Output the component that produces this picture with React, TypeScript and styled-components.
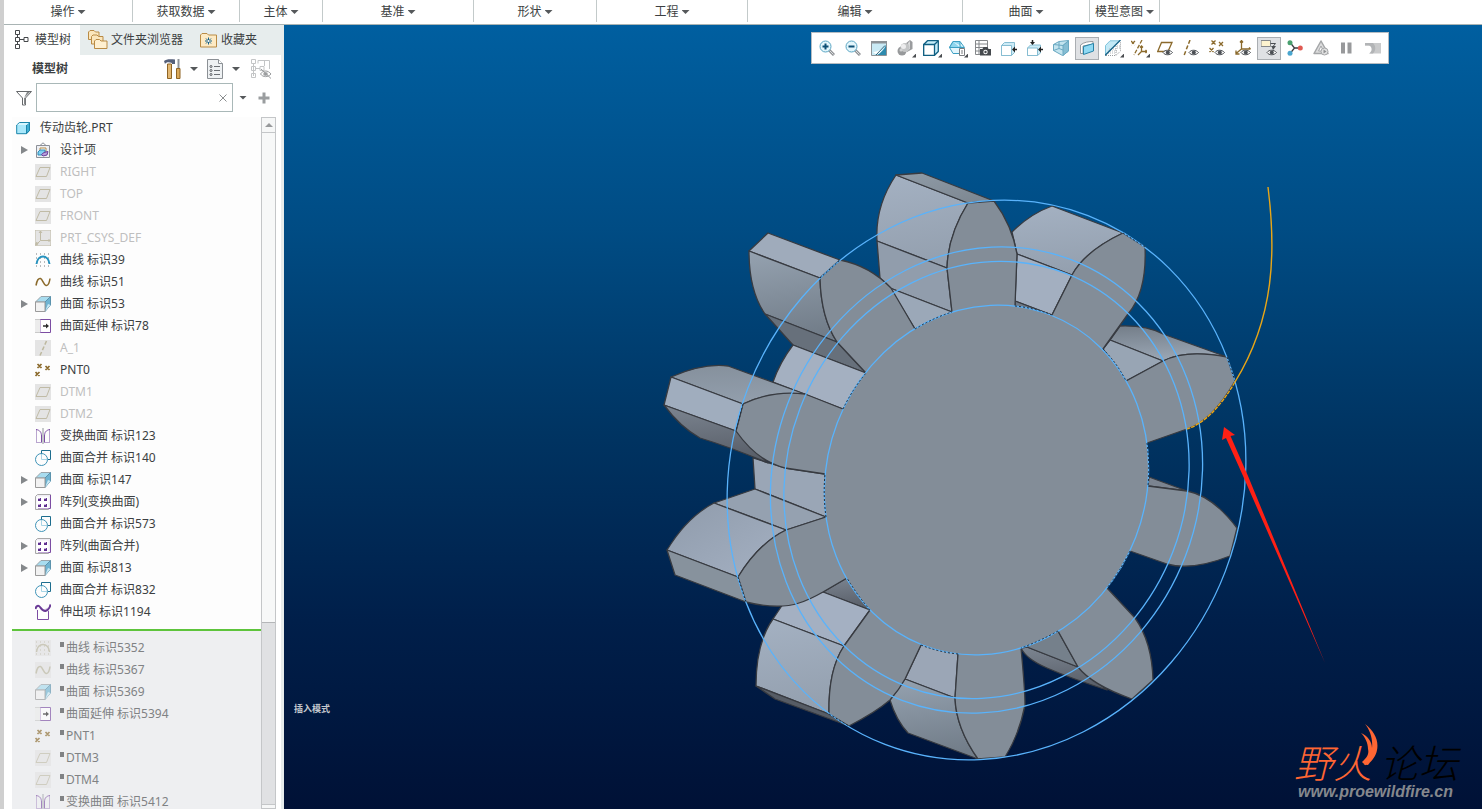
import React from 'react';
import styled, { createGlobalStyle, css } from 'styled-components';

const GlobalStyle = createGlobalStyle`
  * { box-sizing: border-box; }
  html, body, #root { height: 100%; }
  body {
    margin: 0;
    overflow: hidden;
    font: 12px/16px 'Noto Sans', 'Noto Sans CJK SC', sans-serif;
    color: #3c3f42;
  }
  button { border: 0; padding: 0; background: none; font: inherit; color: inherit; }
  svg { display: block; flex: none; }
`;

/* ---------- frame ---------- */

const Frame = styled.div`
  display: flex;
  flex-direction: column;
  height: 100vh;
  border-left: 4px solid #cfcfcf;
  background: #fff;
`;

const Ribbon = styled.nav`
  display: flex;
  flex: none;
  height: 25px;
  border-bottom: 1px solid #a9b4b4;
  background: #fff;
`;

const RibbonGroup = styled.button<{ $width: number }>`
  display: flex;
  align-items: center;
  justify-content: center;
  gap: 3px;
  flex: 0 0 ${(p) => p.$width}px;
  height: 22px;
  padding-top: 2px;
  border-right: 1px solid #c3caca;
  white-space: nowrap;
`;

const Workspace = styled.div`
  display: flex;
  flex: 1;
  min-height: 0;
`;

const Caret = styled.span`
  flex: none;
  width: 8px;
  height: 4px;
  background: #55585b;
  clip-path: polygon(0 0, 100% 0, 50% 100%);
`;

/* ---------- side panel ---------- */

const SidePanel = styled.aside`
  display: flex;
  flex-direction: column;
  flex: 0 0 280px;
  border-right: 3px solid #e6ecec;
  background: #fff;
`;

const TabBar = styled.div`
  display: flex;
  flex: none;
  height: 30px;
  background: #e7eded;
`;

const Tab = styled.button<{ $active?: boolean }>`
  display: flex;
  align-items: center;
  gap: ${(p) => (p.$active ? 6 : 3)}px;
  padding: 0 9px 0 ${(p) => (p.$active ? 11 : 8)}px;
  background: ${(p) => (p.$active ? '#fff' : 'transparent')};
`;

const TitleRow = styled.div`
  display: flex;
  align-items: center;
  flex: none;
  gap: 6px;
  height: 28px;
  padding: 0 6px 0 28px;
`;

const PanelTitle = styled.h2`
  flex: 1;
  margin: 0;
  font-size: 12px;
  font-weight: 700;
`;

const IconButton = styled.button<{ $width?: number }>`
  display: flex;
  align-items: center;
  justify-content: center;
  width: ${(p) => p.$width ?? 18}px;
  height: 20px;
`;

const FilterRow = styled.div`
  display: flex;
  align-items: center;
  flex: none;
  gap: 4px;
  height: 29px;
  padding: 0 6px 0 12px;
`;

const SearchBox = styled.label`
  display: flex;
  align-items: center;
  width: 197px;
  height: 29px;
  border: 1px solid #a9b8b8;
  background: #fff;
`;

const SearchInput = styled.input`
  flex: 1;
  min-width: 0;
  height: 26px;
  border: 0;
  outline: 0;
  padding: 0 4px;
  font: inherit;
`;

const TreeArea = styled.div`
  display: flex;
  flex: 1;
  min-height: 0;
  margin: 5px 5px 0 8px;
`;

const TreeColumn = styled.div`
  display: flex;
  flex-direction: column;
  flex: 1;
  min-width: 0;
  overflow: hidden;
  background: #fdfdfd;
`;

const Tree = styled.ul`
  flex: none;
  margin: 0;
  padding: 0;
  list-style: none;
`;

const ActiveTree = styled(Tree)`
  padding-bottom: 6px;
  border-bottom: 2px solid #5ec43c;
`;

const PendingTree = styled(Tree)`
  padding-top: 6px;
  background: #eeeff1;
`;

const TreeRow = styled.li<{ $tone: Tone; $root?: boolean }>`
  display: flex;
  align-items: center;
  gap: 9px;
  height: 22px;
  padding-left: ${(p) => (p.$root ? 4 : 8)}px;
  color: ${(p) => (p.$tone === 'normal' ? '#3c3f42' : p.$tone === 'hidden' ? '#bfbfbf' : '#808284')};
  white-space: nowrap;
`;

const IconCell = styled.span<{ $faded: boolean }>`
  display: flex;
  opacity: ${(p) => (p.$faded ? 0.65 : 1)};
`;

const IconLead = styled.span`
  display: flex;
  align-items: center;
`;

const Expander = styled.button<{ $shown: boolean }>`
  width: 15px;
  height: 16px;
  ${(p) =>
    p.$shown &&
    css`
      &::before {
        content: '';
        display: block;
        width: 7px;
        height: 8px;
        margin-left: 1px;
        background: #85888b;
        clip-path: polygon(0 0, 100% 50%, 0 100%);
      }
    `}
`;

const RowLabel = styled.span`
  display: flex;
  gap: 2px;
`;

const PendingMark = styled.span`
  width: 4px;
  height: 5px;
  margin-top: 2px;
  background: #808284;
`;

const ScrollBar = styled.div`
  display: flex;
  flex-direction: column;
  flex: 0 0 15px;
  border: solid #c4c6c8;
  border-width: 0 1px;
  background: #e0e1e3;
`;

const ScrollButton = styled.button<{ $height: number }>`
  display: flex;
  align-items: center;
  justify-content: center;
  flex: 0 0 ${(p) => p.$height}px;
  border: solid #c4c6c8;
  border-width: 1px 0;
  background: #f6f7f7;
`;

const UpCaret = styled(Caret)`
  background: #97999b;
  transform: rotate(180deg);
`;

const ScrollThumb = styled.div`
  flex: 0 0 490px;
  border-bottom: 1px solid #b4b6b8;
  background: #f7f8f8;
`;

const ScrollTrack = styled.div`
  flex: 1;
`;

/* ---------- graphics area ---------- */

const Canvas = styled.main`
  position: relative;
  display: flex;
  justify-content: flex-end;
  align-items: flex-start;
  flex: 1;
  min-width: 0;
  padding: 7px 93px 0 0;
  background: linear-gradient(#005fa0, #004c84 26%, #003462 52%, #001f4a 76%, #001136);
`;

const Scene = styled.svg`
  position: absolute;
  inset: 0;
  width: 100%;
  height: 100%;
`;

const ViewToolbar = styled.div`
  position: relative;
  display: flex;
  align-items: center;
  height: 32px;
  padding: 0 2px;
  border: 1px solid #b5bcc2;
  background: #fff;
`;

const ToolButton = styled.button<{ $pressed?: boolean }>`
  position: relative;
  display: flex;
  align-items: center;
  justify-content: center;
  width: 24px;
  height: 23px;
  margin: 0 1px;
  border: 1px solid ${(p) => (p.$pressed ? '#aaaeb2' : 'transparent')};
  background: ${(p) => (p.$pressed ? '#dfe1e4' : 'transparent')};
`;

const MenuCorner = styled.span`
  position: absolute;
  right: 0;
  bottom: 1px;
  width: 4px;
  height: 4px;
  background: #4a4d50;
  clip-path: polygon(100% 0, 100% 100%, 0 100%);
`;

const ModeNote = styled.span`
  position: absolute;
  left: 10px;
  bottom: 92px;
  color: #c4c8ce;
  font-size: 9px;
  font-weight: 700;
`;

const Brand = styled.div`
  position: absolute;
  right: 18px;
  bottom: 8px;
  width: 170px;
  font-style: italic;
`;

const BrandName = styled.div`
  display: flex;
  color: #000;
  font-size: 39px;
  font-weight: 300;
  line-height: 40px;
`;

const BrandAccent = styled.span`
  margin-right: 8px;
  color: #ff6633;
`;

const BrandFlame = styled.svg`
  position: absolute;
  left: 66px;
  top: -20px;
`;

const BrandUrl = styled.a`
  display: block;
  padding-left: 4px;
  color: #85888d;
  font-family: 'Liberation Sans', sans-serif;
  font-size: 16px;
  font-weight: 700;
  line-height: 18px;
  text-decoration: none;
`;

/* ---------- tree icons ---------- */

type Tone = 'normal' | 'hidden' | 'pending';

type TreeIconName =
  | 'part' | 'design' | 'plane' | 'csys' | 'sketch' | 'curve' | 'surface' | 'extend'
  | 'axis' | 'points' | 'mirror' | 'merge' | 'pattern' | 'protrusion';

const Plate = () => <rect width="16" height="16" fill="#e4e4e4" />;

const treeArt: Record<TreeIconName, React.ReactNode> = {
  part: (
    <g stroke="#1c86ab" strokeLinejoin="round">
      <path d="M.7 5 3.500 2.500H13.500V10.500L10.500 13.700H.7Z" fill="#a9e8fb" />
      <path d="M10.500 5 13.500 2.500V10.500L10.500 13.700Z" fill="#3faed3" />
      <path d="M1.200 5 3.800 3H13L10.500 5Z" fill="#d6f6ff" stroke="none" />
    </g>
  ),
  design: (
    <g>
      <path d="M1.500 3.500h13v12h-13z" fill="#eef0f4" stroke="#8c9098" />
      <path d="M5 3.500 8 .8 11 3.500z" fill="#fff" stroke="#8c9098" />
      <path d="M5 6h6v4H5z" fill="#fff" stroke="#b48b4a" />
      <path d="M3 10 5 8h5v3l-2 2H3z" fill="#7fd0f2" stroke="#2f8db8" />
      <path d="M6.500 12.500 9 10.500l4-1-1 3.500-4 1z" fill="#b9a0dc" stroke="#6a3f9c" />
    </g>
  ),
  plane: (
    <g>
      <Plate />
      <path d="M5 3.500h10L11.500 12.500H1z" fill="none" stroke="#c0bba6" />
    </g>
  ),
  csys: (
    <g stroke="#c0bba6" fill="none">
      <Plate />
      <path d="M5.500 1v9.500H15M5.500 10.500 1 15M4 3l1.500-2L7 3M13.500 9l1.500 1.500-1.500 1.500" />
      <path d="M2.500 12.500 1 15" strokeWidth="2.500" />
    </g>
  ),
  sketch: (
    <g>
      <path d="M1 2h14M1 6h14M1 10h14M1 14h14" stroke="#75787c" strokeDasharray="1 3" />
      <path d="M1.500 12C2 7 5 4.500 8 4.500S14 7 14.500 12" fill="none" stroke="#2793bf" strokeWidth="2" />
    </g>
  ),
  curve: <path d="M1 11.500C2 6 3.500 4 5.500 4.500S8.500 11 11 11.500 14.500 8 15 4.500" fill="none" stroke="#8b6a2c" strokeWidth="1.500" />,
  surface: (
    <g>
      <path d="M.5 6 6 .5H15.500L10 6z" fill="#a8dcef" stroke="#9aa4aa" />
      <path d="M10 6 15.500.5V9L10 15.500z" fill="#6fb4d2" stroke="#5b93ad" />
      <path d="M10 15.500 15.500 9 13 8z" fill="#c8e8f4" />
      <path d="M.5 6H10v9.500H.5z" fill="#f2f2f2" stroke="#9a9a9a" />
    </g>
  ),
  extend: (
    <g fill="none">
      <path d="M0 1.500h5.500v13H0" fill="#ececec" stroke="#c9c9c9" />
      <path d="M5.500 1.500h10v13h-10z" fill="#fff" stroke="#7c4da3" />
      <path d="M5.500 2v12" stroke="#c9b5da" />
      <path d="M8 8h5" stroke="#2c2c2c" strokeWidth="1.500" />
      <path d="M11 5.500 14 8l-3 2.500z" fill="#2c2c2c" />
    </g>
  ),
  axis: (
    <g>
      <Plate />
      <path d="M11.500 1 5 15.500" stroke="#bdb89f" strokeDasharray="4 2" strokeWidth="1.500" />
    </g>
  ),
  points: (
    <path d="M2.500 2l4 4m0-4-4 4M10.500 4l4 4m0-4-4 4M.5 10l4 4m0-4-4 4" stroke="#8b6a2c" strokeWidth="1.700" fill="none" />
  ),
  mirror: (
    <g fill="none">
      <path d="M1.500 1v14M1 14.500h5.500M14.500 1v14M15 14.500H9.500" stroke="#b9a5cf" />
      <path d="M1 1.500C5 2 6.500 4.500 6.500 8v6.500M15 1.500c-4 .5-5.500 3-5.500 6.500v6.500" stroke="#7c4da3" />
      <path d="M8 0v16" stroke="#8f9499" />
    </g>
  ),
  merge: (
    <g fill="none" stroke="#1d6d8e">
      <path d="M6.500 5V.5H15.500V9.500H12" />
      <circle cx="6.500" cy="9.500" r="6" stroke="#3f93b7" />
      <path d="M6.500 4v5.500h6" stroke="#a7d4e6" />
    </g>
  ),
  pattern: (
    <g>
      <path d="M2.500.5h13v13l-2 2H.5V2.500z" fill="#f0edf5" stroke="#a8a8a8" />
      <path d="M15.500 1v13.500H3" fill="none" stroke="#7c4da3" />
      <path d="M1.500 2.500h12v12h-12z" fill="#fff" />
      <path d="M3 4h3v3H3zM9 4h3v3H9zM3 10h3v3H3zM9 10h3v3H9z" fill="#5f2f90" />
      <path d="M3 4.500h2M9 4.500h2M3 10.500h2M9 10.500h2" stroke="#c6b4da" />
    </g>
  ),
  protrusion: (
    <g>
      <path d="M2.500 6V15.500H13.500V6" fill="#fff" stroke="#7c4da3" />
      <path d="M9 5.500 14 3v4l-4 .5z" fill="#d3c4e2" />
      <path d="M.5 5C1 1.500 3.500 1 5 3s3 4.500 5.500 4S15 3 15.500.5" fill="none" stroke="#6a3a96" strokeWidth="2" />
    </g>
  ),
};

const TreeIcon = ({ name }: { name: TreeIconName }) => (
  <svg width={name === 'part' ? 15 : 16} height="16" viewBox={name === 'part' ? '0 0 15 16' : '0 0 16 16'}>
    {treeArt[name]}
  </svg>
);

interface FeatureItem {
  label: string;
  icon: TreeIconName;
  tone?: Tone;
  expandable?: boolean;
}

const features: FeatureItem[] = [
  { label: '设计项', icon: 'design', expandable: true },
  { label: 'RIGHT', icon: 'plane', tone: 'hidden' },
  { label: 'TOP', icon: 'plane', tone: 'hidden' },
  { label: 'FRONT', icon: 'plane', tone: 'hidden' },
  { label: 'PRT_CSYS_DEF', icon: 'csys', tone: 'hidden' },
  { label: '曲线 标识39', icon: 'sketch' },
  { label: '曲线 标识51', icon: 'curve' },
  { label: '曲面 标识53', icon: 'surface', expandable: true },
  { label: '曲面延伸 标识78', icon: 'extend' },
  { label: 'A_1', icon: 'axis', tone: 'hidden' },
  { label: 'PNT0', icon: 'points' },
  { label: 'DTM1', icon: 'plane', tone: 'hidden' },
  { label: 'DTM2', icon: 'plane', tone: 'hidden' },
  { label: '变换曲面 标识123', icon: 'mirror' },
  { label: '曲面合并 标识140', icon: 'merge' },
  { label: '曲面 标识147', icon: 'surface', expandable: true },
  { label: '阵列(变换曲面)', icon: 'pattern', expandable: true },
  { label: '曲面合并 标识573', icon: 'merge' },
  { label: '阵列(曲面合并)', icon: 'pattern', expandable: true },
  { label: '曲面 标识813', icon: 'surface', expandable: true },
  { label: '曲面合并 标识832', icon: 'merge' },
  { label: '伸出项 标识1194', icon: 'protrusion' },
];

const pendingArt: Partial<Record<TreeIconName, React.ReactNode>> = {
  sketch: (
    <g>
      <Plate />
      <path d="M1 2h14M1 6h14M1 10h14M1 14h14" stroke="#b5b09a" strokeDasharray="1 3" />
      <path d="M1.500 12C2 7 5 4.500 8 4.500S14 7 14.500 12" fill="none" stroke="#b8b49c" strokeWidth="1.500" />
    </g>
  ),
  curve: (
    <g>
      <Plate />
      <path d="M1 11.500C2 6 3.500 4 5.500 4.500S8.500 11 11 11.500 14.500 8 15 4.500" fill="none" stroke="#b8b49c" strokeWidth="1.500" />
    </g>
  ),
};

const pendingFeatures: FeatureItem[] = [
  { label: '曲线 标识5352', icon: 'sketch' },
  { label: '曲线 标识5367', icon: 'curve' },
  { label: '曲面 标识5369', icon: 'surface' },
  { label: '曲面延伸 标识5394', icon: 'extend' },
  { label: 'PNT1', icon: 'points' },
  { label: 'DTM3', icon: 'plane' },
  { label: 'DTM4', icon: 'plane' },
  { label: '变换曲面 标识5412', icon: 'mirror' },
];

/* ---------- toolbar icons ---------- */

const Eye = () => (
  <g>
    <path d="M6 12.500C8 9.500 13 9.500 15.500 12.500 13 15.500 8 15.500 6 12.500z" fill="#fff" stroke="#4b4f54" />
    <circle cx="10.800" cy="12.500" r="2" fill="#4b4f54" />
  </g>
);

const Lens = ({ plus }: { plus?: boolean }) => (
  <g fill="none">
    <path d="M10 10l5 5" stroke="#8f9296" strokeWidth="3" />
    <path d="M10.500 10.500l4 4" stroke="#dcdedf" />
    <circle cx="6.500" cy="6.500" r="5.500" fill="#e3f6fc" stroke="#5ba6c4" />
    <path d={plus ? 'M3.500 6.500h6M6.500 3.500v6' : 'M3.500 6.500h6'} stroke="#0d4f75" strokeWidth="2" />
  </g>
);

interface Tool {
  label: string;
  art: React.ReactNode;
  pressed?: boolean;
  menu?: boolean;
}

const tools: Tool[] = [
  { label: '放大', art: <Lens plus /> },
  { label: '缩小', art: <Lens /> },
  {
    label: '重画',
    art: (
      <g>
        <path d="M.5 1.500h15v14H.5z" fill="#c9eaf5" stroke="#8c9296" />
        <path d="M0 1h16v2.500H0z" fill="#8c9296" />
        <path d="M15 5v10H4C10 13 13 10 15 5z" fill="#2d8aae" />
        <path d="M2 12C7 12 11 9 14 5L9 13 6 15z" fill="#fff" />
        <path d="M5 15 14 5.500" stroke="#22617c" />
      </g>
    ),
  },
  {
    label: '渲染选项', menu: true,
    art: (
      <g>
        <path d="M8 4 13 0 15.500 2v7L10 12z" fill="#9a9c9e" />
        <path d="M11 3 13 1v8l-2 1z" fill="#d9dadb" />
        <circle cx="5" cy="11" r="4.500" fill="#97999b" />
        <circle cx="8" cy="7.500" r="4.500" fill="#c3c5c6" />
        <circle cx="6.500" cy="6.500" r="2.500" fill="#ededee" />
        <circle cx="4" cy="10" r="1.500" fill="#d2d3d4" />
      </g>
    ),
  },
  {
    label: '显示样式', menu: true,
    art: (
      <g stroke="#0f5f82" strokeLinejoin="round" strokeWidth="1.300">
        <path d="M.7 4.500 4.500.7H15.300V11.500L11.500 15.300H.7z" fill="#c4ecf9" />
        <path d="M.7 4.500H11.500V15.300H.7z" fill="#fff" />
        <path d="M11.500 4.500 15.300.7" fill="none" />
      </g>
    ),
  },
  {
    label: '已保存方向', menu: true,
    art: (
      <g stroke="#3c9fc2" strokeLinejoin="round">
        <path d="M4 1.500h7L15.500 7.500 11 13.500H4L.5 7.500z" fill="#e2f6fd" />
        <path d="M4 1.500 .5 7.500H11L15 7.500M4 1.500h7v6" fill="#8fd6ee" />
        <path d="M10.500 8.500h5v7h-5z" fill="#fff" stroke="#7a7d80" />
        <path d="M12 11h2M12 13h2" stroke="#7a7d80" />
      </g>
    ),
  },
  {
    label: '视图管理器',
    art: (
      <g>
        <path d="M.5.500h12v14H.5zM.5 4h12M.5 7.500h12M.5 11h12M4 .5v14" fill="#fff" stroke="#85888b" />
        <path d="M5 9h2.500l1-2h4l1 2H16v6.500H5z" fill="#45494d" />
        <circle cx="10.500" cy="12" r="2.200" fill="#fff" />
        <circle cx="10.500" cy="12" r="1.200" fill="#45494d" />
      </g>
    ),
  },
  {
    label: '视图向左',
    art: (
      <g>
        <path d="M.5 5.500 3.500 2.500h10v10l-3 3H.5z" fill="#cdebf6" stroke="#86bdd2" />
        <path d="M.5 5.500h10v10H.5z" fill="#fff" stroke="#86bdd2" />
        <path d="M13 9.500h3" stroke="#222" strokeWidth="1.500" />
        <path d="M14 6.500v6l-3-3z" fill="#222" />
      </g>
    ),
  },
  {
    label: '视图向下',
    art: (
      <g>
        <path d="M.5 8 3.500 5h10v8l-3 2.500H.5z" fill="#cdebf6" stroke="#86bdd2" />
        <path d="M.5 8h10v7.500H.5z" fill="#fff" stroke="#86bdd2" />
        <path d="M5.500 0v3M13 9.500h3" stroke="#222" strokeWidth="1.500" />
        <path d="M3 2h5L5.500 5zM14 6.500v6l-3-3z" fill="#222" />
      </g>
    ),
  },
  {
    label: '透视图',
    art: (
      <g stroke="#6aa9c2">
        <path d="M.5 4.500 6 1.500 15.500.5V11L9.500 15.500.5 10.500z" fill="#c3e4ef" />
        <path d="M.5 4.500 10 5.500 15.500.5M.5 10.500 6 8.500l4 1.500M6 8.500V2" fill="none" />
        <path d="M10 5.500 15.500 1v10L10 15.500z" fill="#85bdd3" />
      </g>
    ),
  },
  {
    label: '截面', pressed: true,
    art: (
      <g>
        <path d="M1.500 5C5 2 10 1.500 14 1.500V4L4 6v7.500H1.500z" fill="#fff" stroke="#96999c" />
        <path d="M4.500 6.500 14.500 3.500v7.500L4.500 14.500z" fill="#8fd9f3" stroke="#2783a8" />
      </g>
    ),
  },
  {
    label: '透明度', menu: true,
    art: (
      <g>
        <path d="M.5 5.500 5 1h10L5 11 .5 15z" fill="#c3e9f6" />
        <path d="M4 9h8M3 11h9M3 13h8M12 6h3M12 8h3" stroke="#b5b8ba" strokeDasharray="1 1" />
        <path d="M.5 15V5.500L5 .8h10" fill="none" stroke="#7fc3db" />
        <path d="M1 15.500h10L15.500 11V2M11 15V5" fill="none" stroke="#9a9da0" strokeDasharray="1 1" />
        <path d="M0 15.500 15.500 0" stroke="#145f85" strokeWidth="1.300" />
      </g>
    ),
  },
  {
    label: '基准显示过滤器', menu: true,
    art: (
      <g fill="none" stroke="#8b6a2c" strokeWidth="1.300">
        <path d="M0 1l4 4m0-4L0 5M11 0 3 15" strokeDasharray="4 1.500" />
        <path d="M10.500 6v5.500H16M10.500 11.500 7 15M9 7.500 10.500 6 12 7.500M14.500 10l1.500 1.500-1.500 1.500" />
      </g>
    ),
  },
  {
    label: '平面显示',
    art: (
      <g>
        <path d="M4.500 2.500H15L11 11.500H.7z" fill="none" stroke="#8b6a2c" strokeWidth="1.300" />
        <Eye />
      </g>
    ),
  },
  {
    label: '轴显示',
    art: (
      <g>
        <path d="M7 0 1 15.500" stroke="#8b6a2c" strokeWidth="1.500" strokeDasharray="4 2" />
        <Eye />
      </g>
    ),
  },
  {
    label: '点显示',
    art: (
      <g>
        <path d="M2.500.5l4 4m0-4-4 4M10 2l4 4m0-4-4 4M.5 8l4 4m0-4-4 4" stroke="#8b6a2c" strokeWidth="1.300" />
        <Eye />
      </g>
    ),
  },
  {
    label: '坐标系显示',
    art: (
      <g>
        <path d="M6.500.5V9H15.500M6.500 9 1 13.500M5 2.500 6.500.500 8 2.500M14 7.500 15.500 9M1 10.500v3.500h3.500" fill="none" stroke="#8b6a2c" strokeWidth="1.300" />
        <Eye />
      </g>
    ),
  },
  {
    label: '注释显示', pressed: true,
    art: (
      <g>
        <path d="M0 .5h9.500v6H0z" fill="#fdf3cf" stroke="#85888b" />
        <path d="M9.500 3.500h5L12 6.500v3" fill="none" stroke="#4b4f54" />
        <path d="M10 6h5l-2.500 3.500z" fill="#4b4f54" />
        <Eye />
      </g>
    ),
  },
  {
    label: '旋转中心',
    art: (
      <g>
        <path d="M3.500 3 7.500 8 3.500 13M7.500 8h6" fill="none" stroke="#3a3d40" strokeWidth="1.300" />
        <circle cx="3" cy="2.800" r="2.500" fill="#49a06f" />
        <circle cx="3" cy="13.200" r="2.500" fill="#4aa6cf" />
        <circle cx="13.300" cy="8" r="2.500" fill="#e05a52" />
      </g>
    ),
  },
  {
    label: '仿真查询',
    art: (
      <g>
        <path d="M8 1 15 13.500H1z" fill="#dcdcdd" stroke="#a4a6a8" strokeWidth="1.500" strokeLinejoin="round" />
        <path d="M8 6 10.500 11h-5z" fill="#fff" stroke="#a4a6a8" />
        <circle cx="11.500" cy="11.500" r="3.500" fill="#e2e2e2" stroke="#a4a6a8" />
        <path d="M10.500 9.500 13.500 11.500 10.500 13.500z" fill="#8f9193" />
      </g>
    ),
  },
  { label: '暂停', art: <path d="M2 2.500h4v11H2zM8.500 2.500h4v11h-4z" fill="#98999b" /> },
  {
    label: '恢复',
    art: (
      <g>
        <path d="M0 3h16v10.500H5C8 11 8 7 5 5.500H0z" fill="#c9cacb" />
        <path d="M0 3h8c3 3 3 7.500 0 10.500H4C8 11 7 6.500 4 5.500H0z" fill="#b2b4b6" />
      </g>
    ),
  },
];

/* ---------- model ---------- */

interface Face {
  d: string;
  fill: string;
}

/* Side walls and end caps of the teeth, painted from back to front. */
const sideFaces: Face[] = [
  { fill: 'url(#wallFall)', d: 'M896 175 968 203Q948 235 947 268L877 241Q875 206 896 175Z' },
  { fill: 'url(#capTop)', d: 'M896 175 922 173 994 201 968 203Z' },
  { fill: '#919dac', d: 'M877 241 947 268 952 312 890 288 880 278Z' },
  { fill: '#9ba8b8', d: 'M890 288 952 312 940 330 915 329Z' },
  { fill: 'url(#wallFall)', d: 'M1012 232Q1030 214 1052 206L1123 233Q1085 251 1072 275L1017 254Z' },
  { fill: '#a3afc0', d: 'M1017 254 1072 275 1052 315 1015 301Z' },
  { fill: '#6f7884', d: 'M1015 301 1052 315 1040 325 1015 306Z' },
  { fill: 'url(#capSide)', d: 'M1110 340 1120 326Q1146 325 1163 334L1227 357Q1186 349 1163 361Z' },
  { fill: '#98a5b4', d: 'M1103 349 1110 340 1163 361 1126 381Z' },
  { fill: '#7b8490', d: 'M1149 477 1187 491 1148 486Z' },
  { fill: '#9fabbb', d: 'M768 233 840 260 820 278 749 251Z' },
  { fill: 'url(#wallShade)', d: 'M749 251 820 278Q821 318 837 342L765 314Q749 291 749 251Z' },
  { fill: '#67707b', d: 'M765 314 837 342 866 373 793 345Z' },
  { fill: '#a4b0c1', d: 'M793 345 866 373 860 400 843 409 773 382Q780 362 793 345Z' },
  { fill: 'url(#wallFlip)', d: 'M671 377Q703 363 728 366L805 394Q767 392 743 404Z' },
  { fill: '#a0adbe', d: 'M671 377 743 404 736 431 664 405Z' },
  { fill: '#9aa6b6', d: 'M753 458 755 489 826 517 825 474 785 468Z' },
  { fill: 'url(#deepShade)', d: 'M664 405 736 431 768 463Q730 447 700 438 680 427 664 405Z' },
  { fill: '#95a1b0', d: 'M755 489 826 517 786 530 714 503Z' },
  { fill: 'url(#wallRise)', d: 'M714 503 786 530Q759 543 738 577L667 550Q687 517 714 503Z' },
  { fill: '#87929d', d: 'M667 550 738 577 746 602 675 575Z' },
  { fill: 'url(#deepShade)', d: 'M823 592 870 610 847 578Z' },
  { fill: '#a4b0c2', d: 'M823 592 870 610 844 646 773 619 783 604Z' },
  { fill: 'url(#wallFall)', d: 'M773 619 844 646Q828 670 829 714L756 686Q756 643 773 619Z' },
  { fill: '#565c65', d: 'M756 686 829 714 849 726 775 699Z' },
  { fill: '#9ba6b6', d: 'M921 645 940 640 958 654 955 698 905 679Z' },
  { fill: 'url(#wallShade)', d: 'M905 679 955 698Q956 728 978 759L908 733Q896 720 890 700Z' },
  { fill: 'url(#deepShade)', d: 'M1021 648 1027 647 1078 667 1107 690Q1070 678 1047 668 1026 659 1021 648Z' },
  { fill: '#75808b', d: 'M1027 647 1078 667 1058 631 1040 630Z' },
];

/* Front faces; each one closes inside the hub, which is painted over the seam. */
const frontFaces = [
  'M968 203 994 201Q1012 225 1017 254L1015 306 985 340 952 312 947 268Q948 235 968 203Z',
  'M1123 233 1145 247Q1147 292 1128 314L1103 349 1060 350 1052 315 1072 275Q1085 251 1123 233Z',
  'M1227 357 1235 381Q1212 421 1187 429L1147 443 1110 420 1126 381 1163 361Q1186 349 1227 357Z',
  'M1148 486 1187 491Q1213 496 1237 528L1230 556Q1192 571 1167 564L1130 551 1110 520Z',
  'M1107 588 1135 618Q1152 642 1153 680L1132 699Q1092 685 1078 667L1058 631 1060 590Z',
  'M958 654 955 698Q956 728 978 759L1005 757Q1019 735 1025 705 1025 690 1021 648L990 620Z',
  'M870 610 844 646Q828 670 829 714L849 726Q876 712 890 700 899 690 905 679L921 645 920 600Z',
  'M826 517 786 530Q759 543 738 577L746 602Q778 610 799 603 809 600 823 592L847 578 860 540Z',
  'M743 404Q772 390 805 394L843 409 860 440 825 474 785 468Q757 461 736 431Z',
  'M820 278 840 260Q870 266 891 288L915 329 900 370 866 373 837 342Q821 318 820 278Z',
];

/* Stretches of the hub edge that lie open between two teeth. */
const hubGaps = [
  'M915 329Q933 318 952 312', 'M1015 306Q1035 308 1052 315', 'M1103 349Q1117 363 1126 381',
  'M1147 443Q1150 465 1148 486', 'M1130 551Q1120 571 1107 588', 'M1058 631Q1040 641 1021 648',
  'M958 654Q938 652 921 645', 'M870 610Q857 595 847 578', 'M826 517Q823 495 825 474', 'M843 409Q852 390 866 373',
];

const circleScale = [1, 1.25, 1.333, 1.6];

const Gradient = ({ id, from, to, diagonal }: { id: string; from: string; to: string; diagonal?: boolean }) => (
  <linearGradient id={id} x1="0" y1="0" x2={diagonal ? 1 : 0.15} y2="1">
    <stop offset="0" stopColor={from} />
    <stop offset="1" stopColor={to} />
  </linearGradient>
);

const GearScene = () => (
  <Scene viewBox="284 25 1198 784" role="img" aria-label="传动齿轮">
    <defs>
      <Gradient id="wallFall" from="#a4b1c2" to="#94a0af" />
      <Gradient id="wallRise" from="#8f9bab" to="#a5b1c3" diagonal />
      <Gradient id="wallShade" from="#95a2b0" to="#727d89" />
      <Gradient id="wallFlip" from="#85909c" to="#929eac" />
      <Gradient id="capTop" from="#909ca8" to="#7b858f" diagonal />
      <Gradient id="capSide" from="#737d88" to="#9aa6b4" />
      <Gradient id="deepShade" from="#7c8591" to="#595f69" />
    </defs>
    <g stroke="#383b41" strokeWidth="1.300" strokeLinejoin="round">
      {sideFaces.map((f) => (
        <path key={f.d} d={f.d} fill={f.fill} />
      ))}
      {frontFaces.map((d) => (
        <path key={d} d={d} fill="#838d98" />
      ))}
    </g>
    <g transform="translate(986.500 480) rotate(21)">
      <ellipse rx="159.800" ry="177" fill="#838d98" />
      {circleScale.map((k) => (
        <ellipse key={k} rx={159.8 * k} ry={177 * k} fill="none" stroke="#59b3fc" strokeWidth="1.300" />
      ))}
    </g>
    <g fill="none" stroke="#22303f" strokeDasharray="2 2">
      {hubGaps.map((d) => (
        <path key={d} d={d} />
      ))}
      <path d="M820 278 840 260M743 404 736 431M738 577 746 602M829 714 849 726M1123 233 1145 247M1227 357 1235 381" />
    </g>
    <path d="M1268 187C1276 251 1275 317 1235 382" fill="none" stroke="#e9a616" strokeWidth="1.400" />
    <path d="M1235 382Q1212 421 1187 429" fill="none" stroke="#e9a616" strokeWidth="1.400" strokeDasharray="4 1" />
    <path d="M1224 427 1235 435 1230.500 436 1248 476 1325 663 1243.500 477 1226 438 1222 440Z" fill="#ff2015" />
  </Scene>
);

/* ---------- panels ---------- */

const groups: [string, number][] = [
  ['操作', 129], ['获取数据', 107], ['主体', 83], ['基准', 151], ['形状', 123],
  ['工程', 151], ['编辑', 215], ['曲面', 127], ['模型意图', 70],
];

const TreeTabIcon = () => (
  <svg width="14" height="20" viewBox="0 0 14 20" fill="#fff" stroke="#44474a">
    <path d="M2.500 5v12M5 9.500h4" />
    <path d="M.5.500h4v4h-4zM.5 7.500h4v4h-4zM.5 14.500h4v4h-4zM9 7.500h4v4H9z" />
  </svg>
);

const FoldersIcon = () => (
  <svg width="20" height="20" viewBox="0 0 20 20" fill="#fbe6bb" stroke="#b98b45">
    <path d="M.5 2 2 .5h4L7.500 2H11v7.500H.5z" />
    <path d="M3.500 6.500 5 5h4l1.500 1.500H15V14H3.500z" />
    <path d="M6.500 11 8 9.500h3.500L13 11h6v7.500H6.500z" fill="#fff0d0" />
  </svg>
);

const FavoritesIcon = () => (
  <svg width="18" height="16" viewBox="0 0 18 16">
    <path d="M.5 3 2 1.500h5L8.500 3h8v12H.5z" fill="#fdeac4" stroke="#b98b45" />
    <path d="M8.500 5.500v7M5 9h7M6 6.500l5 5M11 6.500l-5 5" stroke="#13618a" />
    <circle cx="8.500" cy="9" r="1" fill="#fff" />
  </svg>
);

const ToolsIcon = () => (
  <svg width="18" height="20" viewBox="0 0 18 20">
    <path d="M0 2C2 0 6 0 11 .5V5H8V4C5 3 2 3 1 5z" fill="#55607a" />
    <path d="M3.500 5h4v14.500h-4z" fill="#e3b873" stroke="#8f6424" />
    <path d="M14.500 0v9" stroke="#8d9299" strokeWidth="2" />
    <path d="M12.500 9.500h3.500v10h-3.500z" fill="#dba95a" stroke="#8f6424" />
  </svg>
);

const SettingsPageIcon = () => (
  <svg width="16" height="20" viewBox="0 0 16 20">
    <path d="M.5.500h11l4 4v15H.5z" fill="#eef1f3" stroke="#8b9095" />
    <path d="M11.500.5v4h4" fill="#fff" stroke="#8b9095" />
    <path d="M7 7.500h6M7 11.500h6M7 15.500h6" stroke="#6b6f74" />
    <g fill="#fff" stroke="#55595e">
      <circle cx="4" cy="7.500" r="1" />
      <circle cx="4" cy="11.500" r="1" />
      <circle cx="4" cy="15.500" r="1" />
    </g>
  </svg>
);

const HiddenTreeIcon = () => (
  <svg width="21" height="20" viewBox="0 0 21 20" fill="none" stroke="#c3c5c6">
    <path d="M.5.500h4v4h-4zM.5 7.500h4v4h-4zM.5 14.500h4v4h-4zM9 7.500h4v4H9zM2.500 5v12M5 9.500h4M7 1.500h11.500V10M13.500 1.500V7M7 1.500v3" />
    <path d="M9.500 15C12 11 17 11 20 15 17 18.500 12 18.500 9.500 15z" stroke="#9a9c9e" />
    <circle cx="14.500" cy="15" r="2" fill="#9a9c9e" />
    <path d="M10 10l10 9.500" stroke="#9a9c9e" />
  </svg>
);

const FunnelIcon = () => (
  <svg width="16" height="16" viewBox="0 0 16 16">
    <path d="M.5 1.500h15L9.500 8v7h-3V8z" fill="#fff" stroke="#66696c" />
    <path d="M8 8 14 2h-3zM8 8h1.500v6H8z" fill="#85888a" />
  </svg>
);

const FeatureRow = ({ item, pending }: { item: FeatureItem; pending?: boolean }) => (
  <TreeRow $tone={pending ? 'pending' : item.tone ?? 'normal'}>
    <IconLead>
      <Expander $shown={!!item.expandable} disabled={!item.expandable} aria-label="展开" />
      <IconCell $faded={!!pending}>
        {pending && pendingArt[item.icon] ? (
          <svg width="16" height="16" viewBox="0 0 16 16">{pendingArt[item.icon]}</svg>
        ) : (
          <TreeIcon name={item.icon} />
        )}
      </IconCell>
    </IconLead>
    <RowLabel>
      {pending && <PendingMark />}
      {item.label}
    </RowLabel>
  </TreeRow>
);

const ModelTreePanel = () => (
  <SidePanel>
    <TabBar role="tablist">
      <Tab role="tab" aria-selected $active>
        <TreeTabIcon />
        模型树
      </Tab>
      <Tab role="tab">
        <FoldersIcon />
        文件夹浏览器
      </Tab>
      <Tab role="tab">
        <FavoritesIcon />
        收藏夹
      </Tab>
    </TabBar>
    <TitleRow>
      <PanelTitle>模型树</PanelTitle>
      <IconButton aria-label="设置"><ToolsIcon /></IconButton>
      <IconButton $width={12} aria-label="设置菜单"><Caret /></IconButton>
      <IconButton aria-label="显示"><SettingsPageIcon /></IconButton>
      <IconButton $width={12} aria-label="显示菜单"><Caret /></IconButton>
      <IconButton $width={27} aria-label="隐藏树"><HiddenTreeIcon /></IconButton>
    </TitleRow>
    <FilterRow>
      <FunnelIcon />
      <SearchBox>
        <SearchInput type="text" aria-label="搜索模型树" />
        <IconButton aria-label="清除">
          <svg width="8" height="8" viewBox="0 0 8 8"><path d="M.5.5l7 7m0-7-7 7" stroke="#8b8e90" /></svg>
        </IconButton>
      </SearchBox>
      <IconButton $width={12} aria-label="搜索选项"><Caret /></IconButton>
      <IconButton $width={22} aria-label="添加">
        <svg width="12" height="12" viewBox="0 0 12 12"><path d="M6 .5v11M.5 6h11" stroke="#9a9d9f" strokeWidth="3" /></svg>
      </IconButton>
    </FilterRow>
    <TreeArea>
      <TreeColumn>
        <ActiveTree>
          <TreeRow $tone="normal" $root>
            <TreeIcon name="part" />
            传动齿轮.PRT
          </TreeRow>
          {features.map((f) => (
            <FeatureRow key={f.label} item={f} />
          ))}
        </ActiveTree>
        <PendingTree>
          {pendingFeatures.map((f) => (
            <FeatureRow key={f.label} item={f} pending />
          ))}
        </PendingTree>
      </TreeColumn>
      <ScrollBar>
        <ScrollButton $height={16} aria-label="向上滚动"><UpCaret /></ScrollButton>
        <ScrollThumb />
        <ScrollTrack />
        <ScrollButton $height={5} aria-label="向下滚动" />
      </ScrollBar>
    </TreeArea>
  </SidePanel>
);

export default function App() {
  return (
    <Frame>
      <GlobalStyle />
      <Ribbon>
        {groups.map(([name, width]) => (
          <RibbonGroup key={name} $width={width}>
            {name}
            <Caret />
          </RibbonGroup>
        ))}
      </Ribbon>
      <Workspace>
        <ModelTreePanel />
        <Canvas>
          <GearScene />
          <ViewToolbar role="toolbar">
            {tools.map((t) => (
              <ToolButton key={t.label} $pressed={t.pressed} aria-label={t.label}>
                <svg width="16" height="16" viewBox="0 0 16 16">{t.art}</svg>
                {t.menu && <MenuCorner />}
              </ToolButton>
            ))}
          </ViewToolbar>
          <ModeNote>插入模式</ModeNote>
          <Brand>
            <BrandName>
              <BrandAccent>野火</BrandAccent>
              论坛
            </BrandName>
            <BrandFlame width="22" height="44" viewBox="0 0 22 44">
              <path d="M5 1C14 8 19 17 17 27 16 34 11 38 8 42 5 42 3 40 2 39 8 34 9 30 8 26 8 20 5 14 1 10 8 13 12 19 12 25 13 16 10 7 5 1Z" fill="#ff6633" />
            </BrandFlame>
            <BrandUrl href="#">www.proewildfire.cn</BrandUrl>
          </Brand>
        </Canvas>
      </Workspace>
    </Frame>
  );
}
